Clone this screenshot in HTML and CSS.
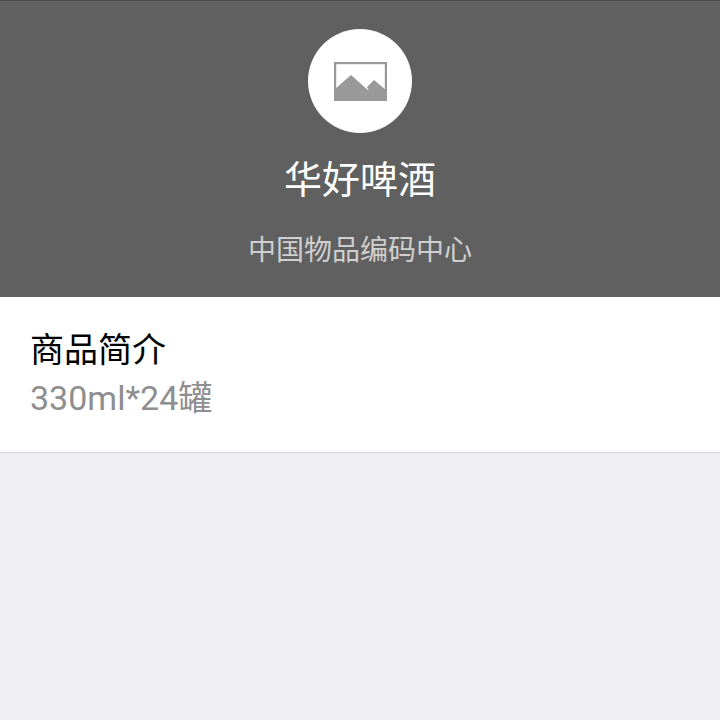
FILE: index.html
```html
<!DOCTYPE html>
<html lang="zh-CN">
  <head>
    <meta charset="UTF-8" />
    <meta name="viewport" content="width=device-width, initial-scale=1" />
    <title>华好啤酒</title>
    <link rel="stylesheet" href="styles.css">
  </head>
  <body>
    <header class="header">
      <div class="logo">
        <svg class="logo-icon" width="53" height="39" viewBox="0 0 53 39">
          <rect x="1" y="1" width="51" height="37" fill="#fff" stroke="#999" stroke-width="2.4" />
          <path d="M1 27 L17 13 L34.7 28.7 L33 25 L40 18 L52 28 V38 H1 Z" fill="#999" />
        </svg>
      </div>
      <h1 class="name">华好啤酒</h1>
      <p class="source">中国物品编码中心</p>
    </header>
    <section class="intro">
      <h2 class="intro-title">商品简介</h2>
      <p class="intro-text">330ml*24罐</p>
    </section>
  </body>
</html>
```

FILE: styles.css
```css
* {
  box-sizing: border-box;
}
html,
body {
  height: 100%;
}
body {
  margin: 0;
  background: #efeff4;
  font-family: Roboto, "Noto Sans CJK SC", sans-serif;
}
.header {
  height: 297px;
  padding-top: 29px;
  background: #606060;
  border-top: 1px solid #4c4c4c;
  display: flex;
  flex-direction: column;
  align-items: center;
}
.logo {
  width: 104px;
  height: 104px;
  margin-top: -1px;
  border-radius: 50%;
  background: #fff;
  display: flex;
  align-items: center;
  justify-content: center;
}
.logo-icon {
  display: block;
}
.name {
  margin: 24px 0 0;
  font-size: 38px;
  line-height: 46px;
  font-weight: 400;
  color: #fff;
}
.source {
  margin: 30px 0 0;
  font-size: 28px;
  line-height: 36px;
  color: #cfcfcf;
}
.intro {
  height: 156px;
  padding: 30px 30px 0;
  background: #fff;
  border-bottom: 1px solid #d9d9de;
}
.intro-title {
  margin: 0;
  font-size: 34px;
  line-height: 46px;
  font-weight: 400;
  color: #000;
}
.intro-text {
  margin: 3px 0 0;
  font-size: 34px;
  line-height: 44px;
  color: #8e8e8e;
}
```
